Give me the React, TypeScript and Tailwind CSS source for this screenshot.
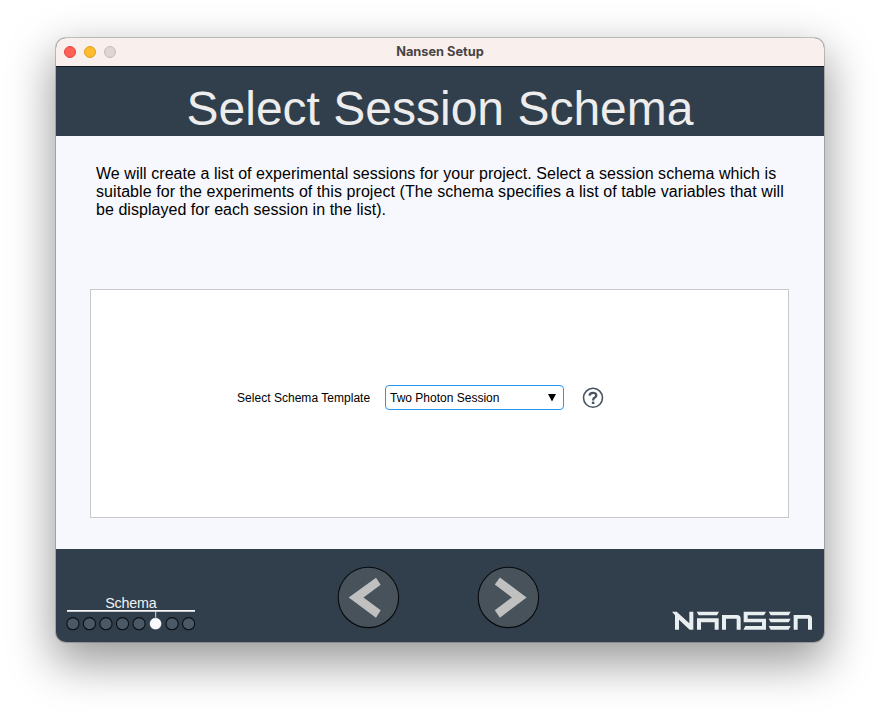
const steps = [0, 1, 2, 3, 4, 5, 6, 7];

function TitleBar() {
  return (
    <div className="relative flex h-7 shrink-0 items-center bg-[#f9f0ee] pl-2">
      <div className="flex gap-2">
        <span className="size-3 rounded-full border border-[#e2443f] bg-[#ff5f57]" />
        <span className="size-3 rounded-full border border-[#dfa023] bg-[#febc2e]" />
        <span className="size-3 rounded-full border border-[#c5bbbb] bg-[#ded5d4]" />
      </div>
      <span className="absolute inset-x-0 top-[5px] text-center font-['Inter',sans-serif] text-[12.8px] leading-[18px] font-bold text-[#494444]">
        Nansen Setup
      </span>
    </div>
  );
}

function NavButton({ label, arrow }: { label: string; arrow: string }) {
  return (
    <button className="size-[62px]" aria-label={label}>
      <svg viewBox="0 0 62 62" className="size-full overflow-visible">
        <circle cx="31.4" cy="31.4" r="30.2" fill="#48525a" stroke="#080a0c" strokeWidth="1.1" />
        <path d={arrow} fill="#c0c0c0" />
      </svg>
    </button>
  );
}

function Progress() {
  return (
    <svg width="132" height="38" viewBox="66 594 132 38" className="overflow-visible">
      <text x="131" y="608" textAnchor="middle" fontSize="14.3" fill="#f0f3f6" textLength="51.5">
        Schema
      </text>
      <path d="M67 610.9H195" stroke="#f8f9fb" strokeWidth="1.7" />
      <path d="M155.7 611V618" stroke="#dfe3e7" strokeWidth="1" />
      {steps.map((i) => (
        <circle
          key={i}
          cx={72.9 + i * 16.53}
          cy="623.7"
          r="6.1"
          fill={i === 5 ? "#f7f9fd" : "#4b5967"}
          stroke={i === 5 ? "#1c252e" : "#0b1016"}
          strokeWidth={i === 5 ? 0.5 : 1.1}
        />
      ))}
    </svg>
  );
}

function Logo() {
  return (
    <svg width="142" height="20" viewBox="36 64 426 60" fill="#e9eef1">
      <path d="M36 66H50L88 101V66H100V120H89L57 90V120H45V77Z" />
      <path d="M110 66H177L171 77H116ZM111 86H176V120H164V98H123V120H111Z" />
      <path d="M186 120V76H231Q242 76 242 87V120H230V87H198V120Z" />
      <path d="M318 66 312 77H263V87H318V120H250L256 109H306V98H251V66Z" />
      <path d="M326 66H392L386 77H332ZM326 87H392L386 98H332ZM326 109H392L386 120H332Z" />
      <path d="M401 120V76H445Q456 76 456 87V120H444V87H413V120Z" />
    </svg>
  );
}

export default function App() {
  return (
    <div className="h-[716px] w-[880px] overflow-hidden bg-white pt-[38px] pl-14 font-['Liberation_Sans',Arial,sans-serif]">
      <div className="flex h-[604px] w-[768px] flex-col overflow-hidden rounded-[10px] bg-[#313e4b] shadow-[0_0_0_1px_rgba(0,0,0,0.2),0_18px_46px_3px_rgba(0,0,0,0.4)]">
        <TitleBar />
        <header className="h-[70px] shrink-0 border-t border-[#0b1824] pt-[14px] text-center text-[48px] leading-[56px] whitespace-nowrap text-[#ededee]">
          Select Session Schema
        </header>
        <main className="h-[413px] shrink-0 bg-[#f7f8fd] px-[34px] pt-[29px]">
          <div className="h-[124px] pl-1.5 text-[16px] leading-[18px] whitespace-nowrap text-black">
            <p className="tracking-[0.048px]">
              We will create a list of experimental sessions for your project. Select a session schema which is
            </p>
            <p className="tracking-[0.065px]">
              suitable for the experiments of this project (The schema specifies a list of table variables that will
            </p>
            <p className="tracking-[0.045px]">be displayed for each session in the list).</p>
          </div>
          <section className="flex h-[229px] w-[699px] items-start border border-[#c9c9cb] bg-white pt-[95px] pl-[146px]">
            <span className="w-[148px] text-[12px] leading-[27px] tracking-[0.03px] whitespace-nowrap">
              Select Schema Template
            </span>
            <div className="flex h-[25px] w-[179px] items-center justify-between rounded-[4px] border border-[#2796ee] bg-white pr-[7px] pl-1 text-[12px]">
              <span>Two Photon Session</span>
              <svg width="8" height="8" viewBox="0 0 8 8">
                <path d="M0 0H8L4 7.5Z" />
              </svg>
            </div>
            <svg width="22" height="22" viewBox="0 0 22 22" className="mt-[2px] ml-[18px]" fill="none" stroke="#485463">
              <circle cx="11" cy="10.8" r="9.5" strokeWidth="1.6" />
              <path d="M7.6 8.6Q7.7 5.9 11 5.9T14.3 8.4Q14.3 9.7 12.7 10.6T11.1 13.4" strokeWidth="2.3" />
              <path d="M11.1 14.6V17" strokeWidth="2.5" />
            </svg>
          </section>
        </main>
        <footer className="flex grow items-start pl-[10px]">
          <div className="mt-[45px] w-[271px]">
            <Progress />
          </div>
          <div className="mt-[17px] flex w-[335px] gap-[78px]">
            <NavButton label="Previous" arrow="M11.7 31.4 39 11.7 43.7 18.8 26.5 31.4 43.7 44.2 39 51.7Z" />
            <NavButton label="Next" arrow="M49.6 31.4 22.9 11.4 17.8 18.5 34.9 31.4 17.8 44.3 22.9 51.7Z" />
          </div>
          <div className="mt-[62px]">
            <Logo />
          </div>
        </footer>
      </div>
    </div>
  );
}
